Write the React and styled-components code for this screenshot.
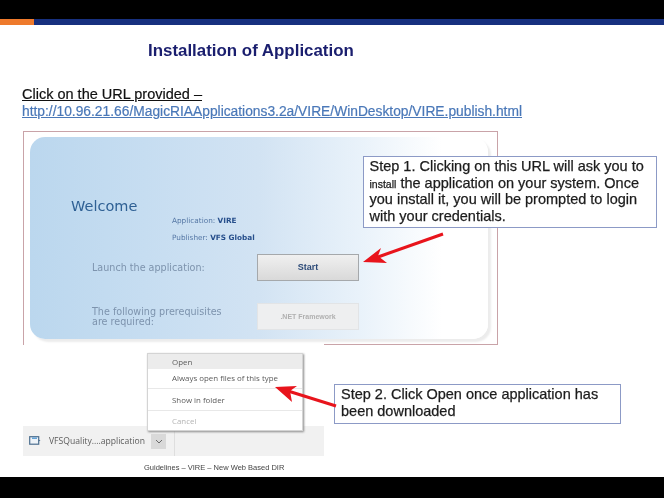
import React from "react";
import styled, { createGlobalStyle } from "styled-components";

const GlobalStyle = createGlobalStyle`
  html, body {
    margin: 0;
    background: #fff;
  }
  * {
    box-sizing: border-box;
  }
`;

const Page = styled.div`
  position: relative;
  width: 664px;
  height: 498px;
  overflow: hidden;
  display: flex;
  flex-direction: column;
  background: #fff;
  font-family: "Liberation Sans", Arial, sans-serif;
  filter: blur(0.3px);
`;

const BlackBand = styled.div`
  height: ${(p) => p.$height}px;
  flex: none;
  background: #000;
`;

const Rule = styled.div`
  height: 6px;
  flex: none;
  background: linear-gradient(to right, #ee7a2c 34px, #17307f 34px);
`;

const Slide = styled.main`
  flex: 1;
  display: flex;
  flex-direction: column;
  padding-top: 16px;
`;

const Title = styled.h1`
  margin: 0 0 0 148px;
  font-size: 16.9px;
  line-height: 19px;
  font-weight: 700;
  color: #1a1e6e;
`;

const Intro = styled.div`
  margin: 26px 0 0 22px;
  line-height: 17px;
  -webkit-text-stroke: 0.2px currentColor;
`;

const IntroLabel = styled.div`
  height: 16px;
  font-size: 14.5px;
  color: #111;
  text-decoration: underline;
`;

const UrlLink = styled.a`
  font-size: 13.8px;
  color: #4a78b8;
  text-decoration: underline;
`;

const Shot = styled.section`
  position: relative;
  width: 475px;
  height: 214px;
  margin: 11px 0 0 23px;
  padding: 5px 9px 6px 6px;
  border: 1px solid #c9a3a8;
  border-bottom: none;
  &::after {
    content: "";
    position: absolute;
    right: -1px;
    bottom: 0;
    width: 174px;
    height: 1px;
    background: #c9a3a8;
  }
`;

const Card = styled.div`
  height: 100%;
  padding: 60px 0 0 41px;
  border-radius: 15px;
  background: linear-gradient(to right, #bbd7ee 0%, #c6ddf1 25%, #d2e3f3 50%, #e9f2fa 72%, #ffffff 90%);
  box-shadow: 3px 3px 2px #ececec;
`;

const Welcome = styled.div`
  font-family: "DejaVu Sans", Verdana, sans-serif;
  font-size: 14.5px;
  line-height: 18px;
  color: #2f6094;
`;

const Meta = styled.div`
  margin: -3px 0 0 101px;
  font-family: "DejaVu Sans", Verdana, sans-serif;
  font-size: 7.3px;
  line-height: 17px;
  color: #5577a5;
  b {
    color: #274f8c;
  }
`;

const AppRow = styled.div`
  display: grid;
  grid-template-columns: 165px 102px;
  align-items: center;
  height: 27px;
  margin: ${(p) => p.$top}px 0 0 21px;
  font-family: "DejaVu Sans", Verdana, sans-serif;
  font-size: 9.6px;
  line-height: 9.5px;
  color: #7d93ad;
`;

const AppButton = styled.div`
  height: 27px;
  display: flex;
  align-items: center;
  justify-content: center;
  font-family: "Liberation Sans", Arial, sans-serif;
  font-weight: 700;
  font-size: ${(p) => (p.$disabled ? 7 : 9)}px;
  color: ${(p) => (p.$disabled ? "#b0b0b0" : "#2c4a78")};
  border: 1px solid ${(p) => (p.$disabled ? "#e2e4e6" : "#a5a8ab")};
  background: ${(p) =>
    p.$disabled ? "#eeeff0" : "linear-gradient(to bottom, #f0f0f0, #d9d9d9)"};
`;

const Callout = styled.div`
  border: 1.5px solid #8c9ac6;
  background: #fff;
  font-size: 14.5px;
  line-height: 16.5px;
  color: #1c1c1c;
  -webkit-text-stroke: 0.25px currentColor;
  small {
    font-size: 10.5px;
    line-height: 1;
  }
`;

const StepOne = styled(Callout)`
  position: absolute;
  left: 339px;
  top: 24px;
  width: 294px;
  height: 72px;
  padding: 1px 2px 0 5.5px;
`;

const StepTwo = styled(Callout)`
  flex: none;
  width: 287px;
  height: 40px;
  margin: 39px 0 0 10px;
  padding: 1px 4px 0 6px;
`;

const Lower = styled.div`
  display: flex;
  align-items: flex-start;
`;

const DownloadBar = styled.div`
  position: relative;
  flex: none;
  width: 301px;
  height: 30px;
  margin: 81px 0 0 23px;
  padding: 0 0 0 6px;
  display: flex;
  align-items: center;
  background: #f1f1f1;
  font-family: "Open Sans", "Liberation Sans", sans-serif;
  font-size: 8.6px;
  color: #5c5c5c;
`;

const FileName = styled.span`
  margin-left: 8px;
  width: 102px;
`;

const ChevronButton = styled.div`
  width: 15px;
  height: 15px;
  display: flex;
  align-items: center;
  justify-content: center;
  background: #d9d9d9;
`;

const BarDivider = styled.div`
  width: 1px;
  height: 30px;
  margin-left: 8px;
  background: #dedede;
`;

const Menu = styled.div`
  position: absolute;
  left: 124px;
  bottom: 25px;
  width: 156px;
  height: 78px;
  background: #fff;
  border: 1px solid #d4d4d4;
  box-shadow: 1px 1px 2px #8c8c8c;
  font-size: 7.9px;
`;

const MenuItem = styled.div`
  height: ${(p) => p.$height}px;
  padding-left: 24px;
  display: flex;
  align-items: center;
  color: ${(p) => (p.$muted ? "#b4b4b4" : "#5c5c5c")};
  background: ${(p) => (p.$active ? "#ececec" : "transparent")};
`;

const MenuSeparator = styled.div`
  height: 1px;
  margin: ${(p) => p.$gap}px 0;
  background: #e8e8e8;
`;

const Footer = styled.footer`
  margin: 5px 0 0 144px;
  font-size: 7.5px;
  line-height: 14px;
  color: #444;
`;

const ArrowLayer = styled.svg`
  position: absolute;
  left: 0;
  top: 0;
  width: 664px;
  height: 498px;
  pointer-events: none;
`;

function FileIcon() {
  return (
    <svg width="12" height="10" viewBox="0 0 12 10">
      <rect x="0.7" y="0.7" width="9" height="7.5" fill="#eef3f8" stroke="#4d6f8f" strokeWidth="1.2" />
      <path d="M3 2.2h5" stroke="#3f8fd0" strokeWidth="1.2" />
      <path d="M9.5 3.5l2 1-2 1z" fill="#4d6f8f" />
    </svg>
  );
}

function Chevron() {
  return (
    <svg width="8" height="5" viewBox="0 0 8 5">
      <path d="M1 1l3 3 3-3" fill="none" stroke="#6a6a6a" strokeWidth="1" />
    </svg>
  );
}

export default function App() {
  return (
    <Page>
      <GlobalStyle />
      <BlackBand $height={19} />
      <Rule />
      <Slide>
        <Title>Installation of Application</Title>
        <Intro>
          <IntroLabel>Click on the URL provided –</IntroLabel>
          <UrlLink href="#">http://10.96.21.66/MagicRIAApplications3.2a/VIRE/WinDesktop/VIRE.publish.html</UrlLink>
        </Intro>
        <Shot>
          <Card>
            <Welcome>Welcome</Welcome>
            <Meta>
              <div>Application: <b>VIRE</b></div>
              <div>Publisher: <b>VFS Global</b></div>
            </Meta>
            <AppRow $top={8}>
              <span>Launch the application:</span>
              <AppButton>Start</AppButton>
            </AppRow>
            <AppRow $top={22}>
              <span>The following prerequisites<br />are required:</span>
              <AppButton $disabled>.NET Framework</AppButton>
            </AppRow>
          </Card>
          <StepOne>
            Step 1. Clicking on this URL will ask you to <small>install</small> the application on your system. Once you install it, you will be prompted to login with your credentials.
          </StepOne>
        </Shot>
        <Lower>
          <DownloadBar>
            <FileIcon />
            <FileName>VFSQuality....application</FileName>
            <ChevronButton><Chevron /></ChevronButton>
            <BarDivider />
            <Menu>
              <MenuItem $active $height={15}>Open</MenuItem>
              <MenuItem $height={18}>Always open files of this type</MenuItem>
              <MenuSeparator $gap={1} />
              <MenuItem $height={20}>Show in folder</MenuItem>
              <MenuSeparator $gap={0} />
              <MenuItem $muted $height={19}>Cancel</MenuItem>
            </Menu>
          </DownloadBar>
          <StepTwo>Step 2. Click Open once application has been downloaded</StepTwo>
        </Lower>
        <Footer>Guidelines – VIRE – New Web Based DIR</Footer>
      </Slide>
      <BlackBand $height={21} />
      <ArrowLayer viewBox="0 0 664 498">
        <path d="M443 234L378 257" stroke="#e8141c" strokeWidth="3" />
        <path d="M363 262L381 248L378 256L387 263Z" fill="#e8141c" />
        <path d="M336 406L288 391" stroke="#e8141c" strokeWidth="3" />
        <path d="M275 387L297 386L290 391L292 402Z" fill="#e8141c" />
      </ArrowLayer>
    </Page>
  );
}
